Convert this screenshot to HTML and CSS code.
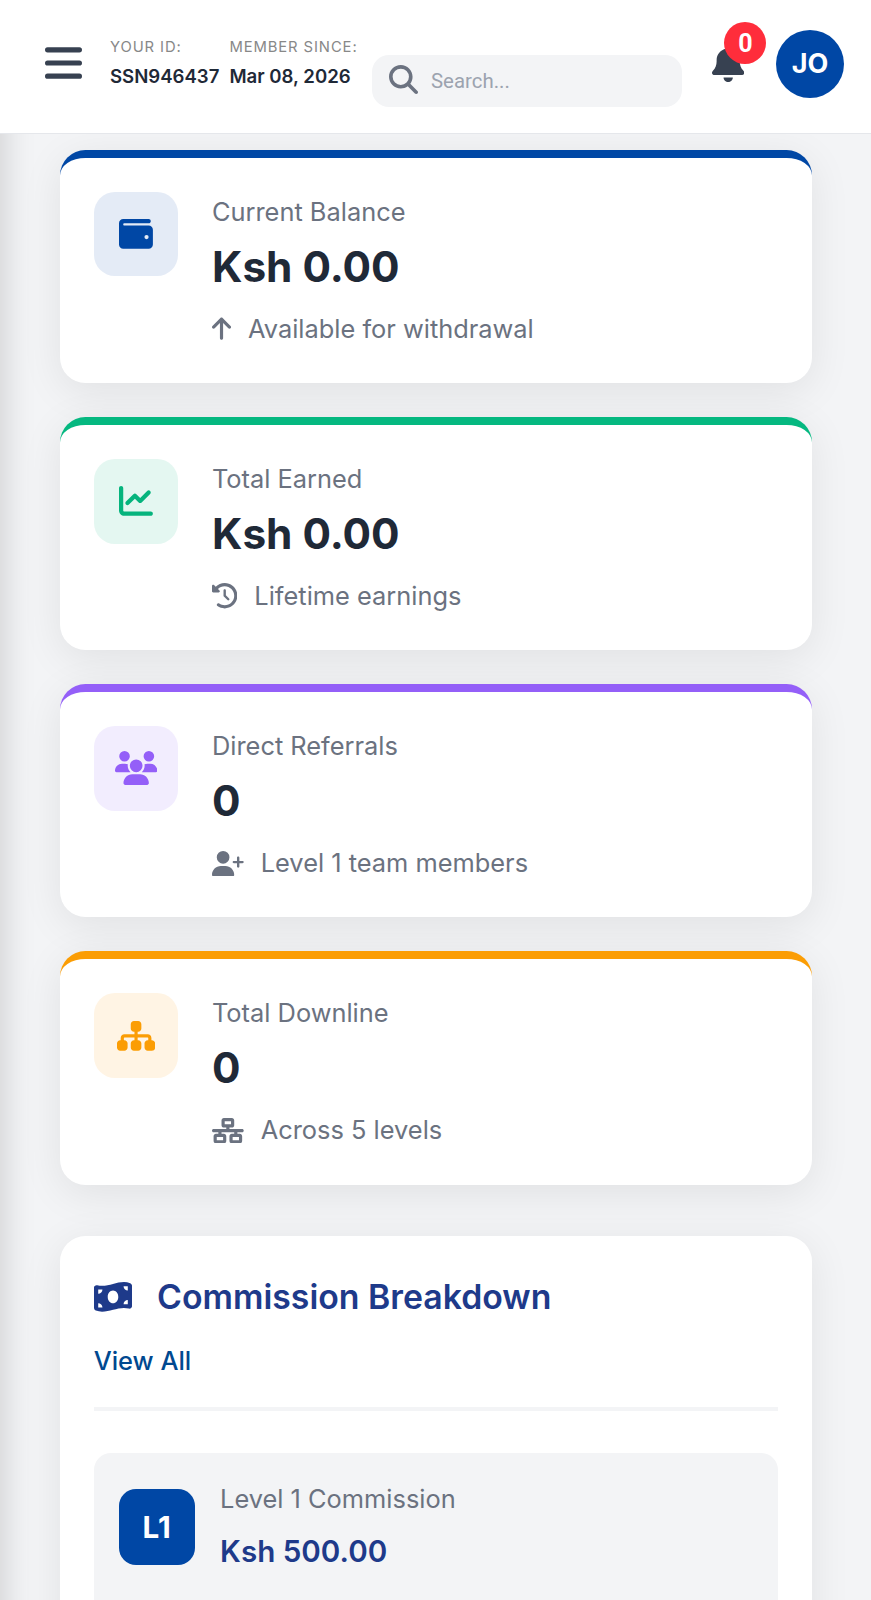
FILE: index.html
```html
<!DOCTYPE html>
<html lang="en">
<head>
    <meta charset="UTF-8">
    <meta name="viewport" content="width=device-width, initial-scale=1.0">
    <title>Dashboard</title>
    <link rel="stylesheet" href="styles.css">
</head>
<body>
    <aside class="sidebar"></aside>

    <header class="header">
        <button class="menu-toggle" aria-label="Menu">
            <svg viewBox="0 0 37 32"><path d="M2.6 2.8H34.4M2.6 16H34.4M2.6 29.2H34.4" fill="none" stroke="currentColor" stroke-width="5.2" stroke-linecap="round"/></svg>
        </button>
        <div class="user-meta">
            <div class="meta-item">
                <span class="meta-label">Your ID:</span>
                <span class="meta-value">SSN946437</span>
            </div>
            <div class="meta-item">
                <span class="meta-label">Member Since:</span>
                <span class="meta-value">Mar 08, 2026</span>
            </div>
        </div>
        <div class="search-box">
            <svg class="icon" viewBox="0 0 512 512"><path d="M416 208c0 45.9-14.9 88.3-40 122.7L502.6 457.4c12.5 12.5 12.5 32.8 0 45.3s-32.8 12.5-45.3 0L330.7 376c-34.4 25.2-76.8 40-122.7 40C93.1 416 0 322.9 0 208S93.1 0 208 0S416 93.1 416 208zM208 352a144 144 0 1 0 0-288 144 144 0 1 0 0 288z"/></svg>
            <input type="text" placeholder="Search...">
        </div>
        <div class="notification">
            <svg class="icon" viewBox="0 0 448 512"><path d="M224 0c-17.7 0-32 14.3-32 32V51.2C119 66 64 130.6 64 208v18.8c0 47-17.3 92.4-48.5 127.6l-7.4 8.3c-8.4 9.4-10.4 22.9-5.3 34.4S19.4 416 32 416H416c12.6 0 24-7.4 29.2-18.9s3.1-25-5.3-34.4l-7.4-8.3C401.3 319.2 384 273.9 384 226.8V208c0-77.4-55-142-128-156.8V32c0-17.7-14.3-32-32-32zm45.3 493.3c12-12 18.7-28.3 18.7-45.3H224 160c0 17 6.7 33.3 18.7 45.3s28.3 18.7 45.3 18.7s33.3-6.7 45.3-18.7z"/></svg>
            <span class="notification-badge">0</span>
        </div>
        <div class="avatar">JO</div>
    </header>

    <main class="content">
        <div class="stats-grid">
            <div class="stat-card blue">
                <div class="stat-icon">
                    <svg class="icon" viewBox="0 0 512 512"><path d="M64 32C28.7 32 0 60.7 0 96V416c0 35.3 28.7 64 64 64H448c35.3 0 64-28.7 64-64V192c0-35.3-28.7-64-64-64H80c-8.8 0-16-7.2-16-16s7.2-16 16-16H448c17.7 0 32-14.3 32-32s-14.3-32-32-32H64zM416 272a32 32 0 1 1 0 64 32 32 0 1 1 0-64z"/></svg>
                </div>
                <div class="stat-info">
                    <div class="stat-label">Current Balance</div>
                    <div class="stat-value">Ksh 0.00</div>
                    <div class="stat-note">
                        <svg class="icon" viewBox="0 0 384 512"><path d="M214.6 41.4c-12.5-12.5-32.8-12.5-45.3 0l-160 160c-12.5 12.5-12.5 32.8 0 45.3s32.8 12.5 45.3 0L160 141.2V448c0 17.7 14.3 32 32 32s32-14.3 32-32V141.2L329.4 246.6c12.5 12.5 32.8 12.5 45.3 0s12.5-32.8 0-45.3l-160-160z"/></svg>
                        <span>Available for withdrawal</span>
                    </div>
                </div>
            </div>

            <div class="stat-card green">
                <div class="stat-icon">
                    <svg class="icon" viewBox="0 0 512 512"><path d="M64 64c0-17.7-14.3-32-32-32S0 46.3 0 64V400c0 44.2 35.8 80 80 80H480c17.7 0 32-14.3 32-32s-14.3-32-32-32H80c-8.8 0-16-7.2-16-16V64zm406.6 86.6c12.5-12.5 12.5-32.8 0-45.3s-32.8-12.5-45.3 0L320 210.7l-57.4-57.4c-12.5-12.5-32.8-12.5-45.3 0l-112 112c-12.5 12.5-12.5 32.8 0 45.3s32.8 12.5 45.3 0L240 221.3l57.4 57.4c12.5 12.5 32.8 12.5 45.3 0l128-128z"/></svg>
                </div>
                <div class="stat-info">
                    <div class="stat-label">Total Earned</div>
                    <div class="stat-value">Ksh 0.00</div>
                    <div class="stat-note">
                        <svg class="icon" viewBox="0 0 512 512"><path d="M75 75L41 41C25.9 25.9 0 36.6 0 57.9V168c0 13.3 10.7 24 24 24H134.1c21.4 0 32.1-25.9 17-41l-30.8-30.8C155 85.5 203 64 256 64c106 0 192 86 192 192s-86 192-192 192c-40.8 0-78.6-12.7-109.7-34.4c-14.5-10.1-34.4-6.6-44.6 7.9s-6.6 34.4 7.9 44.6C151.2 495 201.7 512 256 512c141.4 0 256-114.6 256-256S397.4 0 256 0C185.3 0 121.3 28.7 75 75zm181 53c-13.3 0-24 10.7-24 24V256c0 6.4 2.5 12.5 7 17l72 72c9.4 9.4 24.6 9.4 33.9 0s9.4-24.6 0-33.9l-65-65V152c0-13.3-10.7-24-24-24z"/></svg>
                        <span>Lifetime earnings</span>
                    </div>
                </div>
            </div>

            <div class="stat-card purple">
                <div class="stat-icon">
                    <svg class="icon" viewBox="0 0 640 512"><path d="M144 0a80 80 0 1 1 0 160A80 80 0 1 1 144 0zM512 0a80 80 0 1 1 0 160A80 80 0 1 1 512 0zM0 298.7C0 239.8 47.8 192 106.7 192h42.7c15.9 0 31 3.5 44.6 9.7c-1.3 7.2-1.9 14.7-1.9 22.3c0 38.2 16.8 72.5 43.3 96c-.2 0-.4 0-.7 0H21.3C9.6 320 0 310.4 0 298.7zM405.3 320c-.2 0-.4 0-.7 0c26.6-23.5 43.3-57.8 43.3-96c0-7.6-.7-15-1.9-22.3c13.6-6.3 28.7-9.7 44.6-9.7h42.7C592.2 192 640 239.8 640 298.7c0 11.8-9.6 21.3-21.3 21.3H405.3zM224 224a96 96 0 1 1 192 0 96 96 0 1 1 -192 0zM128 485.3C128 411.7 187.7 352 261.3 352H378.7C452.3 352 512 411.7 512 485.3c0 14.7-11.9 26.7-26.7 26.7H154.7c-14.7 0-26.7-11.9-26.7-26.7z"/></svg>
                </div>
                <div class="stat-info">
                    <div class="stat-label">Direct Referrals</div>
                    <div class="stat-value">0</div>
                    <div class="stat-note">
                        <svg class="icon" viewBox="0 0 640 512"><path d="M96 128a128 128 0 1 1 256 0A128 128 0 1 1 96 128zM0 482.3C0 383.8 79.8 304 178.3 304h91.4C368.2 304 448 383.8 448 482.3c0 16.4-13.3 29.7-29.7 29.7H29.7C13.3 512 0 498.7 0 482.3zM504 312V248H440c-13.3 0-24-10.7-24-24s10.7-24 24-24h64V136c0-13.3 10.7-24 24-24s24 10.7 24 24v64h64c13.3 0 24 10.7 24 24s-10.7 24-24 24H552v64c0 13.3-10.7 24-24 24s-24-10.7-24-24z"/></svg>
                        <span>Level 1 team members</span>
                    </div>
                </div>
            </div>

            <div class="stat-card orange">
                <div class="stat-icon">
                    <svg class="icon" viewBox="0 0 576 512"><path d="M208 80c0-26.5 21.5-48 48-48h64c26.5 0 48 21.5 48 48v64c0 26.5-21.5 48-48 48h-8v40H464c30.9 0 56 25.1 56 56v32h8c26.5 0 48 21.5 48 48v64c0 26.5-21.5 48-48 48H464c-26.5 0-48-21.5-48-48V368c0-26.5 21.5-48 48-48h8V288c0-4.4-3.6-8-8-8H312v40h8c26.5 0 48 21.5 48 48v64c0 26.5-21.5 48-48 48H256c-26.5 0-48-21.5-48-48V368c0-26.5 21.5-48 48-48h8V280H112c-4.4 0-8 3.6-8 8v32h8c26.5 0 48 21.5 48 48v64c0 26.5-21.5 48-48 48H48c-26.5 0-48-21.5-48-48V368c0-26.5 21.5-48 48-48h8V288c0-30.9 25.1-56 56-56H264V192h-8c-26.5 0-48-21.5-48-48V80z"/></svg>
                </div>
                <div class="stat-info">
                    <div class="stat-label">Total Downline</div>
                    <div class="stat-value">0</div>
                    <div class="stat-note">
                        <svg class="icon" viewBox="0 0 640 512"><path d="M256 64H384v64H256V64zM240 0c-26.5 0-48 21.5-48 48v96c0 26.5 21.5 48 48 48h48v32H32c-17.7 0-32 14.3-32 32s14.3 32 32 32h96v32H80c-26.5 0-48 21.5-48 48v96c0 26.5 21.5 48 48 48H240c26.5 0 48-21.5 48-48V368c0-26.5-21.5-48-48-48H192V288H448v32H400c-26.5 0-48 21.5-48 48v96c0 26.5 21.5 48 48 48H560c26.5 0 48-21.5 48-48V368c0-26.5-21.5-48-48-48H512V288h96c17.7 0 32-14.3 32-32s-14.3-32-32-32H352V192h48c26.5 0 48-21.5 48-48V48c0-26.5-21.5-48-48-48H240zM96 448V384H224v64H96zm320-64H544v64H416V384z"/></svg>
                        <span>Across 5 levels</span>
                    </div>
                </div>
            </div>
        </div>

        <section class="panel">
            <div class="panel-header">
                <h2 class="panel-title">
                    <svg class="icon" viewBox="0 0 576 512"><path d="M0 112.5V422.3c0 18 10.1 35 27 41.3c87 32.5 174 10.3 261-11.9c79.8-20.3 159.6-40.7 239.3-18.9c23 6.3 48.7-9.5 48.7-33.4V89.7c0-18-10.1-35-27-41.3C462 15.9 375 38.1 288 60.3C208.2 80.6 128.4 100.9 48.7 79.1C25.6 72.8 0 88.6 0 112.5zM288 352c-44.2 0-80-43-80-96s35.8-96 80-96s80 43 80 96s-35.8 96-80 96zM64 352c35.3 0 64 28.7 64 64H64V352zm64-208c0 35.3-28.7 64-64 64V144h64zM512 304v64H448c0-35.3 28.7-64 64-64zM448 96h64v64c-35.3 0-64-28.7-64-64z"/></svg>
                    <span>Commission Breakdown</span>
                </h2>
                <a href="#" class="view-all">View All</a>
            </div>
            <div class="commission-item">
                <div class="level-badge">L1</div>
                <div>
                    <div class="commission-label">Level 1 Commission</div>
                    <div class="commission-value">Ksh 500.00</div>
                </div>
            </div>
        </section>
    </main>
</body>
</html>
```
FILE: styles.css
```css
* {
    margin: 0;
    padding: 0;
    box-sizing: border-box;
}
body {
    height: 1600px;
    overflow: hidden;
    font-family: Inter, "Liberation Sans", sans-serif;
    font-size: 25.4px;
    line-height: 1.6;
    color: #1f2937;
    background-color: #f3f4f6;
}
.icon {
    display: block;
    flex-shrink: 0;
    height: 1em;
    fill: currentColor;
    fill-rule: evenodd;
}

/* Off-canvas sidebar, closed */
.sidebar {
    position: fixed;
    top: 0;
    left: 0;
    width: 550px;
    height: 1700px;
    background-color: white;
    transform: translateX(-100%);
    box-shadow: 4px 0 30px rgba(0,0,0,0.15);
}

.header {
    position: relative;
    display: flex;
    align-items: center;
    height: 133.5px;
    padding: 0 27px 5px 45px;
    background-color: white;
    border-bottom: 1px solid #e5e7eb;
}
.menu-toggle {
    width: 37px;
    height: 32px;
    margin-bottom: 1px;
    border: none;
    background: none;
    color: #374151;
    cursor: pointer;
}
.menu-toggle svg {
    display: block;
}
.user-meta {
    display: flex;
    gap: 10px;
    width: 262px;
    margin-left: 28px;
    padding-bottom: 3px;
    white-space: nowrap;
}
.meta-item {
    display: flex;
    flex-direction: column;
}
.meta-label {
    font-size: 14.8px;
    line-height: 28px;
    letter-spacing: 0.9px;
    text-transform: uppercase;
    color: #888;
}
.meta-value {
    font-size: 18.6px;
    line-height: 31px;
    font-weight: 600;
}
.search-box {
    display: flex;
    align-items: center;
    gap: 13px;
    width: 310px;
    height: 52px;
    margin-top: 34px;
    padding: 0 17px;
    border-radius: 17px;
    background-color: #f3f4f6;
    color: #6b7280;
}
.search-box .icon {
    height: 29px;
    margin-bottom: 2px;
}
.search-box input {
    width: 200px;
    border: none;
    background: none;
    font-family: Roboto, sans-serif;
    font-size: 20.4px;
}
.search-box input::placeholder {
    color: #9ca3af;
}
.notification {
    position: relative;
    margin-left: 30px;
    font-size: 37px;
    color: #374151;
}
.notification-badge {
    position: absolute;
    top: -23px;
    right: -22px;
    width: 42px;
    height: 42px;
    border-radius: 50%;
    background-color: #ff2d3b;
    color: white;
    font-family: Roboto, sans-serif;
    font-size: 25px;
    line-height: 43px;
    font-weight: 700;
    text-align: center;
}
.avatar {
    width: 68px;
    height: 68px;
    margin-left: auto;
    border-radius: 50%;
    background-color: #0047a5;
    color: white;
    font-size: 27px;
    line-height: 68px;
    font-weight: 700;
    text-align: center;
}

.content {
    padding: 16.5px 59px 0 59.8px;
}
.stats-grid {
    display: grid;
    gap: 33.9px;
    margin-bottom: 51.2px;
}
.stat-card {
    display: flex;
    align-items: flex-start;
    gap: 33.9px;
    padding: 33.9px;
    background-color: white;
    border-top: 8px solid;
    border-radius: 25.4px;
    box-shadow: 0 8.5px 42px rgba(0,0,0,0.08);
}
.stat-icon {
    display: flex;
    align-items: center;
    justify-content: center;
    width: 84.4px;
    height: 84.6px;
    border-radius: 21px;
    font-size: 33.9px;
}
.blue {
    border-color: #0047a5;
}
.blue .stat-icon {
    background-color: #e4ebf6;
    color: #0047a5;
}
.green {
    border-color: #05b880;
}
.green .stat-icon {
    background-color: #e4f7f1;
    color: #05b47d;
}
.purple {
    border-color: #945ff8;
}
.purple .stat-icon {
    background-color: #f2edfe;
    color: #945ff8;
}
.orange {
    border-color: #fb9d04;
}
.orange .stat-icon {
    background-color: #fff4e4;
    color: #fb9d04;
}
.stat-label,
.stat-note,
.commission-label {
    color: #6b7280;
}
.stat-value {
    font-size: 42.3px;
    font-weight: 700;
}
.stat-note {
    display: flex;
    align-items: center;
    gap: 17px;
    margin-top: 8.5px;
}

.panel {
    padding: 33.9px;
    background-color: white;
    border-radius: 25.4px;
    box-shadow: 0 8.5px 42px rgba(0,0,0,0.08);
}
.panel-header {
    display: flex;
    flex-direction: column;
    align-items: flex-start;
    gap: 17px;
    margin-bottom: 42.3px;
    padding-bottom: 25.4px;
    border-bottom: 4px solid #f3f4f6;
}
.panel-title {
    display: flex;
    align-items: center;
    gap: 25.4px;
    font-size: 33.8px;
    font-weight: 600;
    color: #1e3a8a;
}
.view-all {
    font-weight: 500;
    color: #004990;
    text-decoration: none;
}
.commission-item {
    display: flex;
    align-items: center;
    gap: 25.4px;
    padding: 26px 25px 60px;
    border-radius: 17px;
    background-color: #f3f4f6;
}
.level-badge {
    width: 76px;
    height: 76px;
    border-radius: 17px;
    background-color: #0047a5;
    color: white;
    font-size: 29.6px;
    line-height: 76px;
    font-weight: 700;
    text-align: center;
}
.commission-value {
    margin-top: 8.5px;
    font-size: 29.6px;
    font-weight: 600;
    color: #1e3a8a;
}
```
